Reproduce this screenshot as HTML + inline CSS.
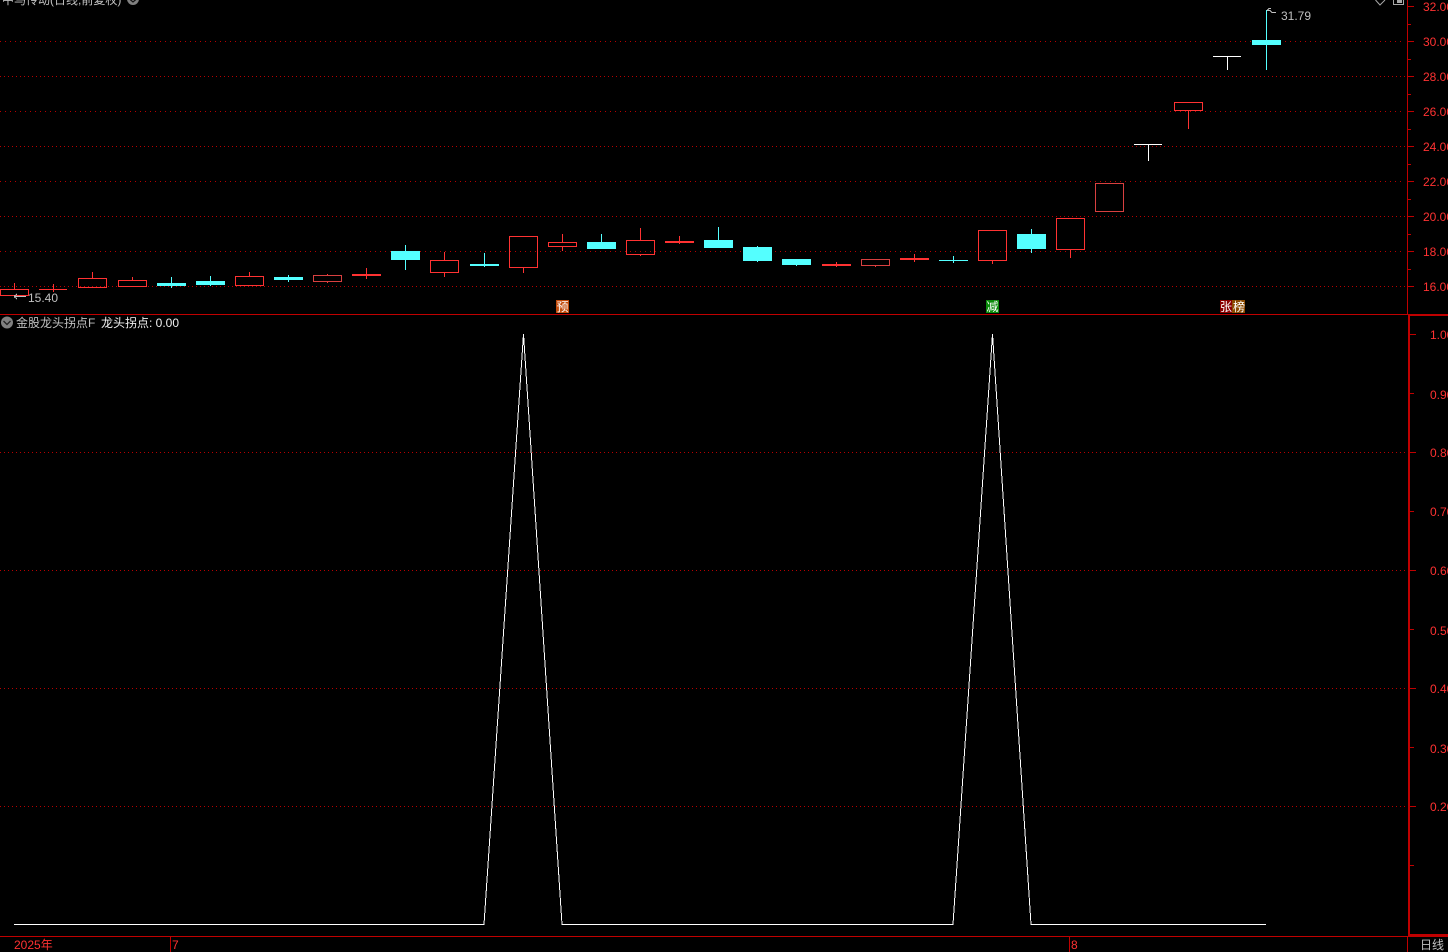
<!DOCTYPE html>
<html lang="zh">
<head>
<meta charset="utf-8">
<title>中马传动</title>
<style>
html,body{margin:0;padding:0;background:#000;width:1448px;height:952px;overflow:hidden}
svg{display:block;position:absolute;left:0;top:0}
text{font-family:"Liberation Sans","WenQuanYi Zen Hei","Noto Sans CJK SC",sans-serif;font-size:12px}
.ax{fill:#ff3232}
.g{fill:#c0c0c0}
.w{fill:#f0f0f0}
</style>
</head>
<body>
<svg width="1448" height="952" viewBox="0 0 1448 952" shape-rendering="crispEdges">
<!-- grid -->
<g stroke="#b80000" stroke-width="1" fill="none">
<path stroke-dasharray="1 4" d="M0 41.500H1405M0 111.500H1405M0 181.500H1405M0 251.500H1405"/>
<path stroke-dasharray="1 3" d="M0 76.500H1405M0 146.500H1405M0 216.500H1405M0 286.500H1405"/>
<path stroke-dasharray="1 3" d="M0 452.500H1405M0 570.500H1405M0 688.500H1405M0 806.500H1405"/>
</g>
<!-- frame -->
<g fill="#c00000">
<rect x="0" y="314" width="1448" height="1"/>
<rect x="1408" y="315" width="41" height="1"/>
<rect x="0" y="936" width="1448" height="1"/>
<rect x="1407" y="0" width="1" height="314"/>
<rect x="1408" y="315" width="2" height="620"/>
<rect x="1408" y="934" width="40" height="2"/>
<rect x="1407" y="937" width="1" height="15"/>
<rect x="170" y="937" width="1" height="15"/>
<rect x="1069" y="937" width="1" height="15"/>
</g>
<!-- ticks -->
<g stroke="#c00000" stroke-width="1" fill="none">
<path d="M1408 6.500h6M1408 41.500h6M1408 76.500h6M1408 111.500h6M1408 146.500h6M1408 181.500h6M1408 216.500h6M1408 251.500h6M1408 286.500h6"/>
<path d="M1408 24.500h3M1408 59.500h3M1408 94.500h3M1408 129.500h3M1408 164.500h3M1408 199.500h3M1408 234.500h3M1408 269.500h3"/>
<path d="M1410 334.500h6M1410 393.500h4M1410 452.500h6M1410 511.500h4M1410 570.500h6M1410 629.500h4M1410 688.500h6M1410 747.500h4M1410 806.500h6M1410 865.500h4"/>
</g>
<!-- red outlined candles -->
<g fill="none" stroke="#ff3232" stroke-width="1">
<path d="M14.500 283V289M53.500 284V292M92.500 272V278M132.500 277V280M249.500 272V276M327.500 274V275M327.500 282V283M444.500 252V260M444.500 273V277M523.500 268V273M562.500 234V242M562.500 247V251M640.500 228V240M640.500 255V256M875.500 266V267M992.500 261V264M1070.500 250V258M1188.500 111V129"/>
<rect x="0.500" y="289.500" width="28" height="6"/>
<rect x="78.500" y="278.500" width="28" height="9"/>
<rect x="118.500" y="280.500" width="28" height="6"/>
<rect x="235.500" y="276.500" width="28" height="9"/>
<rect x="430.500" y="260.500" width="28" height="12"/>
<rect x="509.500" y="236.500" width="28" height="31"/>
<rect x="548.500" y="242.500" width="28" height="4"/>
<rect x="626.500" y="240.500" width="28" height="14"/>
<rect x="978.500" y="230.500" width="28" height="30"/>
<rect x="1056.500" y="218.500" width="28" height="31"/>
<rect x="1174.500" y="102.500" width="28" height="8"/>
</g>
<g fill="none" stroke="#d84040" stroke-width="1">
<rect x="313.500" y="275.500" width="28" height="6"/>
<rect x="861.500" y="259.500" width="28" height="6"/>
<rect x="1095.500" y="183.500" width="28" height="28"/>
</g>
<!-- doji / filled red -->
<g fill="#ff3232">
<rect x="39" y="289" width="28" height="1"/>
<rect x="352" y="274" width="29" height="2"/>
<rect x="366" y="268" width="1" height="11"/>
<rect x="665" y="241" width="29" height="2"/>
<rect x="679" y="236" width="1" height="8"/>
<rect x="822" y="264" width="29" height="2"/>
<rect x="836" y="262" width="1" height="5"/>
<rect x="900" y="258" width="29" height="2"/>
<rect x="914" y="254" width="1" height="8"/>
</g>
<!-- cyan -->
<g fill="#54ffff">
<rect x="157" y="283" width="29" height="3"/><rect x="171" y="277" width="1" height="11"/>
<rect x="196" y="281" width="29" height="4"/><rect x="210" y="276" width="1" height="10"/>
<rect x="274" y="277" width="29" height="3"/><rect x="288" y="275" width="1" height="7"/>
<rect x="391" y="251" width="29" height="9"/><rect x="405" y="245" width="1" height="25"/>
<rect x="470" y="264" width="29" height="2"/><rect x="484" y="253" width="1" height="14"/>
<rect x="587" y="242" width="29" height="7"/><rect x="601" y="234" width="1" height="8"/>
<rect x="704" y="240" width="29" height="8"/><rect x="718" y="227" width="1" height="13"/>
<rect x="743" y="247" width="29" height="14"/><rect x="757" y="246" width="1" height="16"/>
<rect x="782" y="259" width="29" height="6"/><rect x="796" y="265" width="1" height="1"/>
<rect x="939" y="260" width="29" height="1"/><rect x="953" y="256" width="1" height="7"/>
<rect x="1017" y="234" width="29" height="15"/><rect x="1031" y="229" width="1" height="24"/>
<rect x="1252" y="40" width="29" height="5"/><rect x="1266" y="10" width="1" height="60"/>
</g>
<!-- white T candles -->
<g fill="#ffffff">
<rect x="1134" y="144" width="28" height="1"/><rect x="1148" y="144" width="1" height="17"/>
<rect x="1213" y="56" width="28" height="1"/><rect x="1227" y="56" width="1" height="14"/>
</g>
<!-- indicator line -->
<polyline points="14,924.500 484,924.500 523.500,334 562,924.500 953,924.500 992.500,334 1031,924.500 1266,924.500" fill="none" stroke="#ffffff" stroke-width="1"/>
<!-- price arrows -->
<g stroke="#c0c0c0" fill="none" stroke-width="1">
<path d="M14 296.500H26M14 296.500L17 294M14 296.500L17 299"/>
<path d="M1267 10.500h3l2 2h4M1267 10.500l2-2h2"/>
</g>
<!-- marker boxes -->
<rect x="556" y="300" width="13" height="13" fill="#c24a0a"/>
<rect x="986" y="300" width="13" height="13" fill="#0a8a0a"/>
<rect x="1220" y="300" width="12" height="13" fill="#8a0000"/>
<rect x="1232" y="300" width="13" height="13" fill="#8a4a00"/>
<!-- top right icons -->
<g fill="none" stroke="#a8a8a8" stroke-width="1" shape-rendering="auto">
<path d="M1375.500 0L1380 5L1385 0"/>
<path d="M1393.500 0V4.500H1403.500V0"/>
</g>
<rect x="1397" y="0" width="5" height="3" fill="#a8a8a8"/>
<!-- circle icons -->
<g shape-rendering="geometricPrecision">
<circle cx="133" cy="-1" r="6" fill="#808080"/>
<path d="M129.500 -1L133 2L136.500 -1" fill="none" stroke="#111" stroke-width="1.200"/>
<circle cx="7" cy="322.500" r="6" fill="#808080"/>
<path d="M3.500 321L7 324.500L10.500 321" fill="none" stroke="#222" stroke-width="1.300"/>
</g>
<!-- text -->
<g shape-rendering="auto">
<text class="g" x="2" y="4">中马传动(日线,前复权)</text>
<text class="g" x="28" y="302">15.40</text>
<text class="g" x="1281" y="20">31.79</text>
<text class="g" x="16" y="327">金股龙头拐点F</text>
<text class="w" x="101" y="327">龙头拐点: 0.00</text>
<g class="ax">
<text x="1423" y="11">32.00</text>
<text x="1423" y="46">30.00</text>
<text x="1423" y="81">28.00</text>
<text x="1423" y="116">26.00</text>
<text x="1423" y="151">24.00</text>
<text x="1423" y="186">22.00</text>
<text x="1423" y="221">20.00</text>
<text x="1423" y="256">18.00</text>
<text x="1423" y="291">16.00</text>
<text x="1430" y="339">1.00</text>
<text x="1430" y="399">0.90</text>
<text x="1430" y="457">0.80</text>
<text x="1430" y="516">0.70</text>
<text x="1430" y="575">0.60</text>
<text x="1430" y="635">0.50</text>
<text x="1430" y="693">0.40</text>
<text x="1430" y="753">0.30</text>
<text x="1430" y="811">0.20</text>
<text x="14" y="949">2025年</text>
<text x="172" y="949">7</text>
<text x="1071" y="949">8</text>
</g>
<text class="g" x="1420" y="949">日线</text>
<text x="556.500" y="311" fill="#fff">预</text>
<text x="986.500" y="311" fill="#fff">减</text>
<text x="1220" y="311" fill="#fff">张</text>
<text x="1233" y="311" fill="#fff">榜</text>
</g>
</svg>
</body>
</html>
